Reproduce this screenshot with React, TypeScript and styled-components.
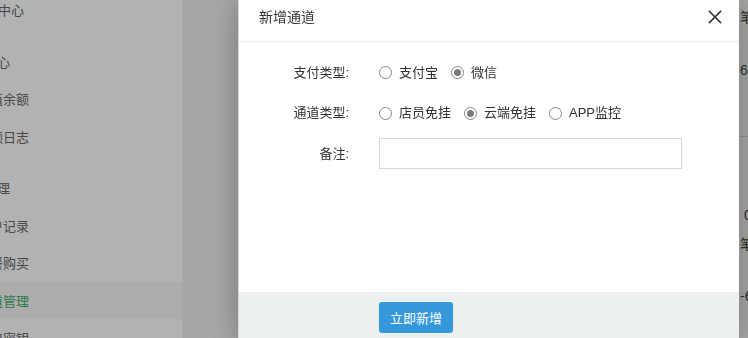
import React, { useState } from "react";
import styled, { createGlobalStyle, css } from "styled-components";

const Global = createGlobalStyle`
  html, body { margin: 0; padding: 0; width: 748px; height: 338px; overflow: hidden; }
  body { font-family: "Liberation Sans", "Noto Sans CJK SC", sans-serif; font-size: 13px; color: #333; background: #f0f0f0; }
  * { box-sizing: border-box; }
`;

const Page = styled.div`
  display: flex;
  width: 748px;
  height: 338px;
  overflow: hidden;
`;

const Sidebar = styled.nav`
  width: 182px;
  flex: none;
  background: #fff;
  overflow: hidden;
`;

const MenuList = styled.ul`
  list-style: none;
  margin: -9px 0 0 -60px;
  padding: 0;
  width: 242px;
`;

const MenuHeading = styled.li`
  height: 37.5px;
  margin-top: 14px;
  display: flex;
  align-items: center;
  padding-left: 18px;
  color: #666;
  white-space: nowrap;
`;

const MenuItem = styled.li<{ $active?: boolean; $indent?: number }>`
  height: 37.5px;
  display: flex;
  align-items: center;
  padding-left: ${(p) => p.$indent ?? 37}px;
  color: #666;
  white-space: nowrap;
  ${(p) =>
    p.$active &&
    css`
      background: #f6f6f6;
      color: #3fae6a;
    `}
`;

const Main = styled.main`
  flex: 1;
  display: flex;
  background: #f0f0f0;
`;

const Spacer = styled.div`
  width: 558px;
  flex: none;
`;

const StatColumn = styled.div`
  display: flex;
  flex-direction: column;
  color: #444;
  font-size: 14px;
  white-space: nowrap;
  width: 60px;
`;

const Stat = styled.div<{ $h: number; $mt?: number; $line?: boolean }>`
  height: ${(p) => p.$h}px;
  margin-top: ${(p) => p.$mt ?? 0}px;
  display: flex;
  align-items: center;
  ${(p) => p.$line && css`border-bottom: 1px solid #ccc;`}
`;

const Overlay = styled.div`
  position: fixed;
  inset: 0;
  background: rgba(0, 0, 0, 0.3);
`;

const Modal = styled.div`
  position: fixed;
  left: 238px;
  top: 0;
  width: 501px;
  background: #fff;
  box-shadow: 0 0 30px rgba(0, 0, 0, 0.3);
  border-left: 1px solid rgba(0, 0, 0, 0.15);
  display: flex;
  flex-direction: column;
`;

const Header = styled.div`
  height: 42px;
  padding: 0 12px 8px 20px;
  border-bottom: 1px solid #eee;
  display: flex;
  align-items: center;
  justify-content: space-between;
`;

const Title = styled.span`
  font-size: 14px;
  color: #333;
  line-height: 20px;
`;

const CloseBtn = styled.button`
  width: 24px;
  height: 24px;
  border: 0;
  padding: 0;
  background: transparent;
  color: #333;
  display: flex;
  align-items: center;
  justify-content: center;
  cursor: pointer;
`;

const Body = styled.div`
  height: 250px;
  padding-top: 15px;
  display: flex;
  flex-direction: column;
  gap: 9.5px;
`;

const Row = styled.div`
  height: 31px;
  display: grid;
  grid-template-columns: 110px 1fr;
  column-gap: 30px;
  align-items: center;
`;

const Label = styled.label`
  text-align: right;
  color: #333;
  line-height: 20px;
`;

const RadioGroup = styled.div`
  display: flex;
  align-items: center;
  gap: 13px;
`;

const RadioOption = styled.label`
  display: flex;
  align-items: center;
  gap: 7px;
  cursor: pointer;
  color: #333;
  line-height: 20px;
`;

const RadioCircle = styled.span<{ $checked: boolean }>`
  width: 13px;
  height: 13px;
  border-radius: 50%;
  border: 1px solid #858585;
  display: flex;
  align-items: center;
  justify-content: center;
  background: #fff;
  &::after {
    content: "";
    width: 7px;
    height: 7px;
    border-radius: 50%;
    background: ${(p) => (p.$checked ? "#7a7a7a" : "transparent")};
  }
`;

const Input = styled.input`
  width: 303px;
  height: 31px;
  border: 1px solid #d2d6de;
  padding: 0 8px;
  font: inherit;
  outline: none;
`;

const Footer = styled.div`
  background: #ecf0f1;
  padding: 10px 0 10px 140px;
  display: flex;
`;

const PrimaryButton = styled.button`
  width: 74px;
  height: 31px;
  border: 0;
  border-radius: 3px;
  background: #3498db;
  color: #fff;
  font-family: inherit;
  font-size: 13px;
  cursor: pointer;
`;

function Radio({ label, checked, onClick }: { label: string; checked: boolean; onClick: () => void }) {
  return (
    <RadioOption onClick={onClick}>
      <RadioCircle $checked={checked} />
      {label}
    </RadioOption>
  );
}

export default function App() {
  const [pay, setPay] = useState("微信");
  const [channel, setChannel] = useState("云端免挂");
  return (
    <>
      <Global />
      <Page>
        <Sidebar>
          <MenuList>
            <MenuItem $indent={32}>个人中心</MenuItem>
            <MenuHeading>财务中心</MenuHeading>
            <MenuItem>充值余额</MenuItem>
            <MenuItem>余额日志</MenuItem>
            <MenuHeading>通道管理</MenuHeading>
            <MenuItem>账户记录</MenuItem>
            <MenuItem>套餐购买</MenuItem>
            <MenuItem $active>通道管理</MenuItem>
            <MenuItem>接口密钥</MenuItem>
          </MenuList>
        </Sidebar>
        <Main>
          <Spacer />
          <StatColumn>
            <Stat $h={32}>笔数</Stat>
            <Stat $h={76}>63</Stat>
            <Stat $h={29} $line />
            <Stat $h={30} $mt={63}>&nbsp;0.00</Stat>
            <Stat $h={26}>笔数</Stat>
            <Stat $h={80}>-6</Stat>
          </StatColumn>
        </Main>
      </Page>
      <Overlay />
      <Modal>
        <Header>
          <Title>新增通道</Title>
          <CloseBtn aria-label="关闭">
            <svg width="24" height="24" viewBox="0 0 24 24" fill="none" stroke="currentColor" strokeWidth="1.6" strokeLinecap="square">
              <path d="M6.5 6.5 17.5 17.5M17.5 6.5 6.5 17.5" />
            </svg>
          </CloseBtn>
        </Header>
        <Body>
          <Row>
            <Label>支付类型:</Label>
            <RadioGroup>
              {["支付宝", "微信"].map((v) => (
                <Radio key={v} label={v} checked={pay === v} onClick={() => setPay(v)} />
              ))}
            </RadioGroup>
          </Row>
          <Row>
            <Label>通道类型:</Label>
            <RadioGroup>
              {["店员免挂", "云端免挂", "APP监控"].map((v) => (
                <Radio key={v} label={v} checked={channel === v} onClick={() => setChannel(v)} />
              ))}
            </RadioGroup>
          </Row>
          <Row>
            <Label>备注:</Label>
            <Input />
          </Row>
        </Body>
        <Footer>
          <PrimaryButton>立即新增</PrimaryButton>
        </Footer>
      </Modal>
    </>
  );
}
